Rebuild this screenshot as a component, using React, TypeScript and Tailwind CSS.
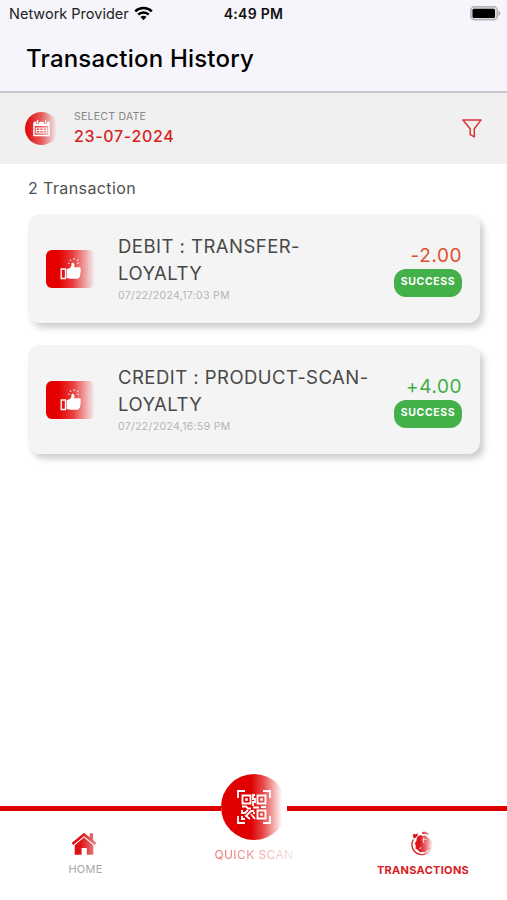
import React from "react";

type Transaction = {
  title: string;
  date: string;
  amount: string;
  credit: boolean;
};

const transactions: Transaction[] = [
  { title: "DEBIT : TRANSFER-LOYALTY", date: "07/22/2024,17:03 PM", amount: "-2.00", credit: false },
  { title: "CREDIT : PRODUCT-SCAN-LOYALTY", date: "07/22/2024,16:59 PM", amount: "+4.00", credit: true },
];

function WifiIcon() {
  return (
    <svg width="19" height="15" viewBox="0 0 19 15" fill="none" stroke="#000" strokeWidth="2.5">
      <path d="M1.2 5.3a11.8 11.8 0 0 1 16.6 0" />
      <path d="M4.2 8.6a7.5 7.5 0 0 1 10.6 0" />
      <path d="M9.5 14.2 6.5 11a4.2 4.2 0 0 1 6 0Z" fill="#000" stroke="none" />
    </svg>
  );
}

function BatteryIcon() {
  return (
    <svg width="31" height="15" viewBox="0 0 31 15">
      <rect x="0.8" y="0.8" width="26.6" height="13" rx="3.8" fill="#ddd" stroke="#b3b3b6" strokeWidth="1.5" />
      <rect x="2.5" y="2.7" width="22.5" height="9.2" rx="1.5" fill="#000" />
      <path d="M28.5 5c2.4.8 2.4 4 0 4.8Z" fill="#a9a9ac" />
    </svg>
  );
}

function CalendarIcon() {
  return (
    <svg width="17" height="17" viewBox="0 0 17 17" fill="none" stroke="#fff">
      <path d="M1 2.5h2M6.5 2.5h4M14 2.5h2V15.5H1V2.5" strokeWidth="1.5" />
      <path d="M1 3h15v3H1z" fill="#fff" stroke="none" />
      <path d="M4.5.5v3.2M12.5.5v3.2" stroke="#e96565" strokeWidth="3" />
      <path d="M4.5.3v3.2M12.5.3v3.2" strokeWidth="1.4" />
      <path d="M3.3 8h10.4v5H3.3zM3.3 10.5h10.4M6.8 8v5M10.2 8v5" strokeWidth="1.1" />
    </svg>
  );
}

function FilterIcon() {
  return (
    <svg width="20" height="19" viewBox="0 0 20 19" fill="none" stroke="#d9363a" strokeWidth="1.5" strokeLinejoin="round">
      <path d="M.9.9h18.2l-6.8 8.9v8.1l-4.1-2.2V9.8Z" />
    </svg>
  );
}

function ThumbIcon() {
  return (
    <svg width="22" height="22" viewBox="0 0 22 22" fill="#fff">
      <path d="M1.2 11h4.3v9.5H1.2z" fill="none" stroke="#fff" strokeWidth="1.3" />
      <path d="M6.6 11.2 9.8 10c1.5-.8 1.8-2.5 1.7-4 0-.8.5-1.3 1.2-1.3 1.8 0 2.2 2.4 1.4 4.6H19c2 0 2.3 2 1.3 2.8.8.6.7 2-.1 2.6.6.8.4 2-.3 2.4.3 1.1 0 2.1-.8 2.4-.5 1.1-1.5 1.2-2.8 1.2H11c-1.5 0-2.4-.6-4.4-.8Z" />
      <path d="m11 3-1-1.5M14 2V0M17.2 3l1-1.5M9.5 5.5 8.2 5M17.3 5.5l1.6-.5" stroke="#fff" strokeOpacity="0.85" strokeWidth="1.1" />
    </svg>
  );
}

function QrIcon() {
  return (
    <svg width="34" height="34" viewBox="0 0 34 34" fill="none" stroke="#fff">
      <path d="M1 8V1h7M26 1h7v7M33 26v7h-7M8 33H1v-7" strokeWidth="1.8" />
      <path d="M5.5 5.5h8v8h-8zM20.5 5.5h8v8h-8zM20.5 20.5h8v8h-8z" strokeWidth="1.9" />
      <path d="M8.2 8.2h2.6v2.6H8.2zM23.2 8.2h2.6v2.6h-2.6zM23.2 23.2h2.6v2.6h-2.6z" fill="#fff" stroke="none" />
      <path d="M18 5h-2v4h2v3h-2v4M5 16.5h4l2 2h3M5 20v3h3l3-3M16 17.5h6M24 17h5M17 21h-3l-5 5 4 3M5 26v3h3M14 24l4 5M17 24v-2" strokeWidth="1.8" />
    </svg>
  );
}

function HomeIcon() {
  return (
    <svg width="26" height="24" viewBox="0 0 26 24">
      <defs>
        <linearGradient id="home-fill" gradientUnits="userSpaceOnUse" x1="0" y1="0" x2="26" y2="0">
          <stop offset="0.35" stopColor="#dd1015" />
          <stop offset="1" stopColor="#e78d8d" />
        </linearGradient>
      </defs>
      <g fill="url(#home-fill)">
        <path d="M13 .7 18.8 5.3V1.2h3.3v6.7l3.2 3-1.5 2L13 4.2 2.2 13 .6 11Z" />
        <path d="M13 5.5 22.3 13.3v9.5h-6.5v-6.7h-5.2v6.7H3.7v-9.5Z" />
      </g>
    </svg>
  );
}

function ClockIcon() {
  return (
    <svg width="24" height="26" viewBox="0 0 24 26">
      <defs>
        <linearGradient id="clock-fill" gradientUnits="userSpaceOnUse" x1="0" y1="0" x2="24" y2="0">
          <stop offset="0.4" stopColor="#dc151b" />
          <stop offset="0.65" stopColor="#e56c70" />
          <stop offset="0.93" stopColor="#fbeaea" />
        </linearGradient>
      </defs>
      <path d="M3.4 8.5A9.9 9.9 0 1 0 20.6 9" fill="none" stroke="url(#clock-fill)" strokeWidth="1.3" />
      <path d="M8 5.2 10.5 4l2.5 1 2.7-.5 2 2 2.2 1.2.3 3 1.3 2.3-1.2 2.5-.2 3-2.7 1-2 2-2.8-.6-2.8.4-1.8-2.2-2.4-1.6.2-2.8-1-2.5 1.6-2.1.3-2.8Z" fill="url(#clock-fill)" />
      <path d="M2.8 5.2 3.6 2.4l2.2 1L7.6 2v3L4.3 7.7ZM12 1.2c2-.7 5-.3 6.5 1.3l.8 2-3-1.2L12 3Z" fill="url(#clock-fill)" />
      <path d="M13.7 6.5c-1 1.8-.8 3.5.3 5.5M13.5 8.3h3M9.6 17.8l1.4-1.4" fill="none" stroke="#fff" strokeOpacity="0.8" strokeWidth="1.1" />
    </svg>
  );
}

function TransactionCard({ item }: { item: Transaction }) {
  return (
    <article className="flex h-[109px] items-center rounded-[12px] bg-[#f4f4f4] pr-[18px] pl-[18px] shadow-[4px_5px_6px_rgba(0,0,0,0.19)]">
      <div className="flex h-[38px] w-[49px] shrink-0 items-center justify-center rounded-[6px] bg-[linear-gradient(90deg,#e50000_25%,#e83e3e_55%,#f4f4f4_100%)]">
        <ThumbIcon />
      </div>
      <div className="ml-[23px] flex w-[265px] shrink-0 flex-col pb-[2px]">
        <h2 className="text-[18.5px] leading-[27px] tracking-[0.47px] text-[#484848]">{item.title}</h2>
        <time className="mt-[1px] text-[10.5px] leading-[15px] tracking-[0.33px] text-[#b5b5b5]">{item.date}</time>
      </div>
      <div className="ml-auto flex flex-col items-end pt-[1px]">
        <span className={`text-[19px] leading-[27px] tracking-[0.55px] ${item.credit ? "text-[#43ad47]" : "text-[#e44d2c]"}`}>
          {item.amount}
        </span>
        <span className="flex h-[28px] w-[68px] items-center justify-center rounded-[12px] bg-[#43b049] pb-[1px] text-[10.5px] font-bold tracking-[0.6px] text-white">
          SUCCESS
        </span>
      </div>
    </article>
  );
}

export default function App() {
  return (
    <div className="flex h-[900px] w-full flex-col overflow-hidden bg-white font-['Inter',sans-serif]">
      <header className="h-[93px] shrink-0 border-b-2 border-[#c8c8cd] bg-[#f6f5fb]">
        <div className="grid h-[27px] grid-cols-3 items-center">
          <div className="flex items-center gap-[5px] pl-[9px] text-[14.5px] whitespace-nowrap text-[#222]">
            Network Provider
            <WifiIcon />
          </div>
          <div className="text-center text-[14px] font-semibold tracking-[0.3px] text-[#111]">4:49 PM</div>
          <div className="flex justify-end pr-[6px]">
            <BatteryIcon />
          </div>
        </div>
        <h1 className="mt-[14px] pl-[26px] text-[24px] leading-[36px] font-medium tracking-[0.2px] text-black">
          Transaction History
        </h1>
      </header>

      <section className="flex h-[71px] shrink-0 items-center bg-[#f0f0f0] pr-[25px] pl-[25px]">
        <div className="flex size-[33px] items-center justify-center rounded-full bg-[linear-gradient(90deg,#e00b0b_5%,#e65c5c_50%,#f0f0f0_96%)]">
          <CalendarIcon />
        </div>
        <div className="ml-[16px] flex flex-col pb-[2px]">
          <span className="text-[10.5px] leading-[15px] tracking-[0.25px] text-[#858585]">SELECT DATE</span>
          <span className="mt-[1px] text-[16px] leading-[22px] font-medium tracking-[0.67px] text-[#d91e22]">23-07-2024</span>
        </div>
        <button className="ml-auto" aria-label="Filter">
          <FilterIcon />
        </button>
      </section>

      <main className="flex-1 pr-[27px] pl-[28px]">
        <p className="pt-[12px] text-[16px] leading-[24px] tracking-[0.4px] text-[#505050]">2 Transaction</p>
        <div className="mt-[14px] flex flex-col gap-[22px]">
          {transactions.map((item) => (
            <TransactionCard key={item.title} item={item} />
          ))}
        </div>
      </main>

      <nav className="h-[127px] shrink-0">
        <div className="flex h-[67px] items-center">
          <div className="mt-[3px] h-[5px] flex-1 bg-[#dc0000]" />
          <div className="flex size-[66px] items-center justify-center rounded-full bg-[linear-gradient(90deg,#e00000_45%,#e74a4a_64%,#ffffff_93%)]">
            <QrIcon />
          </div>
          <div className="mt-[3px] h-[5px] flex-1 bg-[#dc0000]" />
        </div>
        <div className="-mt-[8px] grid grid-cols-3">
          <a className="flex flex-col items-center pr-[2px]">
            <HomeIcon />
            <span className="mt-[5px] pl-[4px] text-[11px] leading-[16px] tracking-[0.25px] text-[#a8a8a8]">HOME</span>
          </a>
          <a className="flex flex-col items-center pt-[15px]">
            <span className="bg-[linear-gradient(90deg,#e56c6c,#ea8b8b_45%,#f9e9e9)] bg-clip-text pl-[1px] text-[12px] leading-[16px] tracking-[0.4px] text-transparent">
              QUICK SCAN
            </span>
          </a>
          <a className="-mt-[1px] flex flex-col items-center pr-[2px]">
            <ClockIcon />
            <span className="mt-[5px] pl-[3px] text-[11px] leading-[16px] font-bold tracking-[0.3px] text-[#d91c22]">TRANSACTIONS</span>
          </a>
        </div>
      </nav>
    </div>
  );
}
